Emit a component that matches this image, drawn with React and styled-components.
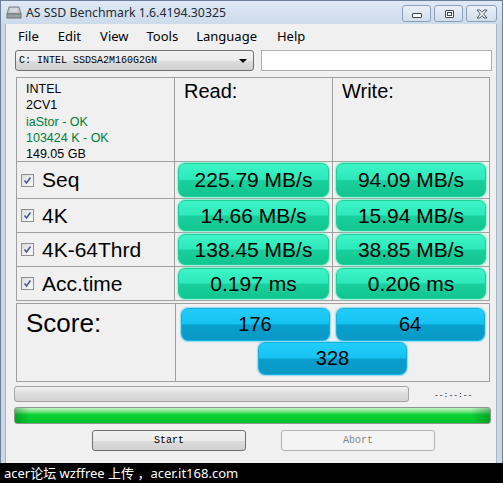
import React from 'react';
import styled, { createGlobalStyle } from 'styled-components';

const GlobalStyle = createGlobalStyle`
    html, body {
        margin: 0;
        padding: 0;
        background: #000;
    }
`;

const results = [
    { name: 'Seq', read: '225.79 MB/s', write: '94.09 MB/s', height: 36 },
    { name: '4K', read: '14.66 MB/s', write: '15.94 MB/s', height: 33 },
    { name: '4K-64Thrd', read: '138.45 MB/s', write: '38.85 MB/s', height: 33 },
    { name: 'Acc.time', read: '0.197 ms', write: '0.206 ms', height: 33 },
];

const menuItems = [
    { label: 'File', gap: 19 },
    { label: 'Edit', gap: 19 },
    { label: 'View', gap: 18 },
    { label: 'Tools', gap: 18 },
    { label: 'Language', gap: 20 },
    { label: 'Help', gap: 0 },
];

const DriveIcon = () => (
    <svg width="16" height="15" viewBox="0 0 16 15">
        <path d="M3 2 L13 2 L15 9 L1 9 Z" fill="#bfc3c8" stroke="#7d8389" strokeWidth="1" />
        <rect x="1" y="9" width="14" height="4" fill="#9aa0a6" stroke="#6b7177" />
        <path d="M4 4 L12 4 M4 6 L12 6" stroke="#e8eaec" strokeWidth="1" />
        <rect x="11" y="10.5" width="2" height="1" fill="#6fd46f" />
    </svg>
);

const CaptionIcon = ({ kind }) => {
    if (kind === 'min') {
        return (
            <svg width="12" height="10" viewBox="0 0 12 10">
                <rect x="1.5" y="4.5" width="9" height="4" rx="0.5" fill="#fff" stroke="#3b4653" />
            </svg>
        );
    }
    if (kind === 'max') {
        return (
            <svg width="12" height="10" viewBox="0 0 12 10">
                <rect x="2.5" y="1.5" width="8" height="7" rx="0.5" fill="#fff" stroke="#3b4653" />
                <rect x="4.5" y="3.5" width="4" height="3" fill="none" stroke="#3b4653" />
            </svg>
        );
    }
    return (
        <svg width="14" height="10" viewBox="0 0 14 10">
            <path d="M2 1 L5 1 L7 3.4 L9 1 L12 1 L8.6 5 L12 9 L9 9 L7 6.6 L5 9 L2 9 L5.4 5 Z"
                fill="#fff" stroke="#3b4653" strokeWidth="0.9" strokeLinejoin="round" />
        </svg>
    );
};

const CheckIcon = () => (
    <svg width="9" height="9" viewBox="0 0 9 9">
        <path d="M1.5 4.5 L3.5 7 L7.5 1.5" fill="none" stroke="#4b5a8c" strokeWidth="1.6" />
    </svg>
);

const App = () => {
    return (
        <>
            <GlobalStyle />
            <Window>
                <TitleBar>
                    <DriveIcon />
                    <Title>AS SSD Benchmark 1.6.4194.30325</Title>
                    <CaptionButtons>
                        <CaptionButton><CaptionIcon kind="min" /></CaptionButton>
                        <CaptionButton><CaptionIcon kind="max" /></CaptionButton>
                        <CaptionButton wide><CaptionIcon kind="close" /></CaptionButton>
                    </CaptionButtons>
                </TitleBar>
                <Frame>
                    <Client>
                        <MenuBar>
                            {menuItems.map((m) => <MenuItem key={m.label} gap={m.gap}>{m.label}</MenuItem>)}
                        </MenuBar>

                        <DriveRow>
                            <Combo>
                                <span>C: INTEL SSDSA2M160G2GN</span>
                                <Arrow />
                            </Combo>
                            <TextBox />
                        </DriveRow>

                        <ResultGrid>
                            <InfoCell>
                                <InfoLine>INTEL</InfoLine>
                                <InfoLine>2CV1</InfoLine>
                                <InfoLine ok>iaStor - OK</InfoLine>
                                <InfoLine ok>103424 K - OK</InfoLine>
                                <InfoLine>149.05 GB</InfoLine>
                            </InfoCell>
                            <HeadCell>Read:</HeadCell>
                            <HeadCell>Write:</HeadCell>

                            {results.map((r) => (
                                <React.Fragment key={r.name}>
                                    <LabelCell style={{ height: r.height }}>
                                        <CheckBox><CheckIcon /></CheckBox>
                                        <Label>{r.name}</Label>
                                    </LabelCell>
                                    <BarCell>
                                        <ValueBar>{r.read}</ValueBar>
                                    </BarCell>
                                    <BarCell>
                                        <ValueBar>{r.write}</ValueBar>
                                    </BarCell>
                                </React.Fragment>
                            ))}
                        </ResultGrid>

                        <ScoreBox>
                            <ScoreLabel>Score:</ScoreLabel>
                            <ScoreCell>
                                <ScoreBar>176</ScoreBar>
                                <ScoreBar>64</ScoreBar>
                                <ScoreBar>328</ScoreBar>
                            </ScoreCell>
                        </ScoreBox>

                        <ProgressRow>
                            <EmptyProgress />
                            <TimeText>--:--:--</TimeText>
                        </ProgressRow>
                        <GreenProgress />

                        <ButtonRow>
                            <Button>Start</Button>
                            <Button disabled>Abort</Button>
                        </ButtonRow>
                    </Client>
                </Frame>
                <Watermark>acer论坛 wzffree 上传 ，acer.it168.com</Watermark>
            </Window>
        </>
    );
};

const Window = styled.div`
    width: 503px;
    height: 483px;
    display: flex;
    flex-direction: column;
    overflow: hidden;
    background: #cbd8e7;
    font-family: "Liberation Sans", Arial, sans-serif;
`;

const TitleBar = styled.div`
    height: 24px;
    flex: none;
    display: flex;
    align-items: center;
    padding: 0 5px 0 5px;
    box-sizing: border-box;
    background: linear-gradient(#dfe9f5, #ccdaea);
    border-top: 1px solid #6d7f94;
    border-left: 1px solid #6d7f94;
    border-right: 1px solid #6d7f94;
`;

const Title = styled.div`
    margin-left: 4px;
    font-family: "Noto Sans", "Open Sans", sans-serif;
    font-size: 12.3px;
    color: #1e2a36;
    flex: 1;
`;

const CaptionButtons = styled.div`
    display: flex;
    gap: 3px;
    align-self: flex-start;
    margin-top: 4px;
`;

const CaptionButton = styled.div`
    width: ${(p) => (p.wide ? 31 : 29)}px;
    height: 17px;
    box-sizing: border-box;
    border: 1px solid #8b9fb8;
    border-radius: 3px;
    background: linear-gradient(#e9f0f8, #d2deeb);
    display: flex;
    align-items: center;
    justify-content: center;
`;

const Frame = styled.div`
    flex: 1;
    display: flex;
    padding: 0 5px 0 4px;
    border-left: 1px solid #6d7f94;
    border-right: 1px solid #6d7f94;
`;

const Client = styled.div`
    flex: 1;
    background: #f0f0f0;
    border-left: 1px solid #a9b6c4;
    border-right: 1px solid #a9b6c4;
    display: flex;
    flex-direction: column;
`;

const MenuBar = styled.div`
    height: 24px;
    display: flex;
    align-items: center;
    padding-left: 12px;
    font-family: "Noto Sans", "Open Sans", sans-serif;
    font-size: 13px;
    color: #000;
`;

const MenuItem = styled.div`
    margin-right: ${(p) => p.gap}px;
`;

const DriveRow = styled.div`
    display: flex;
    gap: 7px;
    margin-top: 2px;
    padding-left: 9px;
    height: 21px;
`;

const Combo = styled.div`
    width: 239px;
    box-sizing: border-box;
    border: 1px solid #707070;
    border-radius: 3px;
    background: linear-gradient(#f2f2f2 0%, #ebebeb 50%, #dddddd 51%, #cfcfcf 100%);
    display: flex;
    align-items: center;
    justify-content: space-between;
    padding: 0 6px 0 3px;
    font-family: "Liberation Mono", "DejaVu Sans Mono", monospace;
    font-size: 10px;
    color: #000;
`;

const Arrow = styled.div`
    width: 0;
    height: 0;
    border-left: 4px solid transparent;
    border-right: 4px solid transparent;
    border-top: 4px solid #000;
`;

const TextBox = styled.div`
    width: 231px;
    box-sizing: border-box;
    border: 1px solid #abadb3;
    background: #fff;
`;

const ResultGrid = styled.div`
    margin: 6px 0 0 10px;
    width: 474px;
    box-sizing: border-box;
    display: grid;
    grid-template-columns: 157px 157px 156px;
    gap: 1px;
    border: 1px solid #a0a0a0;
    background: #a0a0a0;
`;

const Cell = styled.div`
    background: #f0f0f0;
`;

const InfoCell = styled(Cell)`
    height: 83px;
    padding: 3px 0 0 9px;
    box-sizing: border-box;
`;

const InfoLine = styled.div`
    font-size: 12.5px;
    line-height: 16.3px;
    color: ${(p) => (p.ok ? '#007d3a' : '#000')};
`;

const HeadCell = styled(Cell)`
    font-size: 20px;
    padding: 2px 0 0 9px;
    color: #000;
`;

const LabelCell = styled(Cell)`
    display: flex;
    align-items: center;
    padding-left: 4px;
`;

const CheckBox = styled.div`
    width: 11px;
    height: 11px;
    border: 1px solid #8e8f8f;
    background: linear-gradient(135deg, #dcdcdc, #fbfbfb);
    display: flex;
    align-items: center;
    justify-content: center;
`;

const Label = styled.div`
    margin-left: 8px;
    font-size: 21px;
    color: #000;
`;

const BarCell = styled(Cell)`
    display: flex;
    padding: 1px 3px 1px 3px;
`;

const ValueBar = styled.div`
    flex: 1;
    border-radius: 7px;
    border: 1px solid #1ccf99;
    box-shadow: 0 0 1px 1px #8ef3d5;
    background: linear-gradient(#3ef4c6 0%, #2ee9bb 48%, #19d09c 52%, #12c590 100%);
    display: flex;
    align-items: center;
    justify-content: center;
    font-size: 21px;
    color: #000;
`;

const ScoreBox = styled.div`
    margin: 2px 0 0 10px;
    width: 474px;
    height: 79px;
    box-sizing: border-box;
    display: grid;
    grid-template-columns: 158px 1fr;
    gap: 1px;
    border: 1px solid #a0a0a0;
    background: #a0a0a0;
`;

const ScoreLabel = styled(Cell)`
    font-size: 26px;
    padding: 4px 0 0 9px;
    color: #000;
`;

const ScoreCell = styled(Cell)`
    display: flex;
    flex-wrap: wrap;
    justify-content: center;
    align-content: flex-start;
    gap: 1px 6px;
    padding-top: 4px;
`;

const ScoreBar = styled.div`
    width: 147px;
    height: 31px;
    border-radius: 7px;
    border: 1px solid #16b0e0;
    box-shadow: 0 0 1px 1px #8fdcf5;
    background: linear-gradient(#22cdfa 0%, #15c2f1 48%, #089ecd 52%, #0a99c6 100%);
    display: flex;
    align-items: center;
    justify-content: center;
    font-size: 20px;
    color: #000;
`;

const ProgressRow = styled.div`
    display: flex;
    align-items: center;
    margin: 4px 0 0 8px;
    height: 16px;
`;

const EmptyProgress = styled.div`
    width: 395px;
    height: 16px;
    box-sizing: border-box;
    border: 1px solid #a3a3a3;
    border-radius: 3px;
    background: linear-gradient(#f3f3f3 0%, #dedede 45%, #d2d2d2 100%);
`;

const TimeText = styled.div`
    margin-left: 25px;
    font-family: "Liberation Mono", monospace;
    font-size: 8px;
    color: #000;
`;

const GreenProgress = styled.div`
    margin: 5px 0 0 8px;
    width: 477px;
    height: 17px;
    box-sizing: border-box;
    border: 1px solid #8e978e;
    border-radius: 3px;
    background:
        linear-gradient(90deg, rgba(0, 90, 20, 0.35) 0%, rgba(0, 0, 0, 0) 3%, rgba(0, 0, 0, 0) 96%, rgba(0, 90, 20, 0.35) 100%),
        linear-gradient(#c4f5c4 0%, #6fe27f 25%, #0ad233 45%, #00c42a 100%);
`;

const ButtonRow = styled.div`
    display: flex;
    gap: 35px;
    margin: 6px 0 0 86px;
`;

const Button = styled.div`
    width: 154px;
    height: 21px;
    box-sizing: border-box;
    border: 1px solid ${(p) => (p.disabled ? '#adb2b5' : '#707070')};
    border-radius: 3px;
    background: ${(p) => (p.disabled
        ? '#f4f4f4'
        : 'linear-gradient(#f2f2f2 0%, #ebebeb 50%, #dddddd 51%, #cfcfcf 100%)')};
    display: flex;
    align-items: center;
    justify-content: center;
    font-family: "Liberation Mono", "DejaVu Sans Mono", monospace;
    font-size: 10px;
    color: ${(p) => (p.disabled ? '#838383' : '#000')};
`;

const Watermark = styled.div`
    height: 20px;
    flex: none;
    background: #000;
    color: #fff;
    font-family: "Noto Sans", "Noto Sans CJK SC", sans-serif;
    font-size: 13px;
    line-height: 20px;
    padding-left: 4px;
`;

export default App;
